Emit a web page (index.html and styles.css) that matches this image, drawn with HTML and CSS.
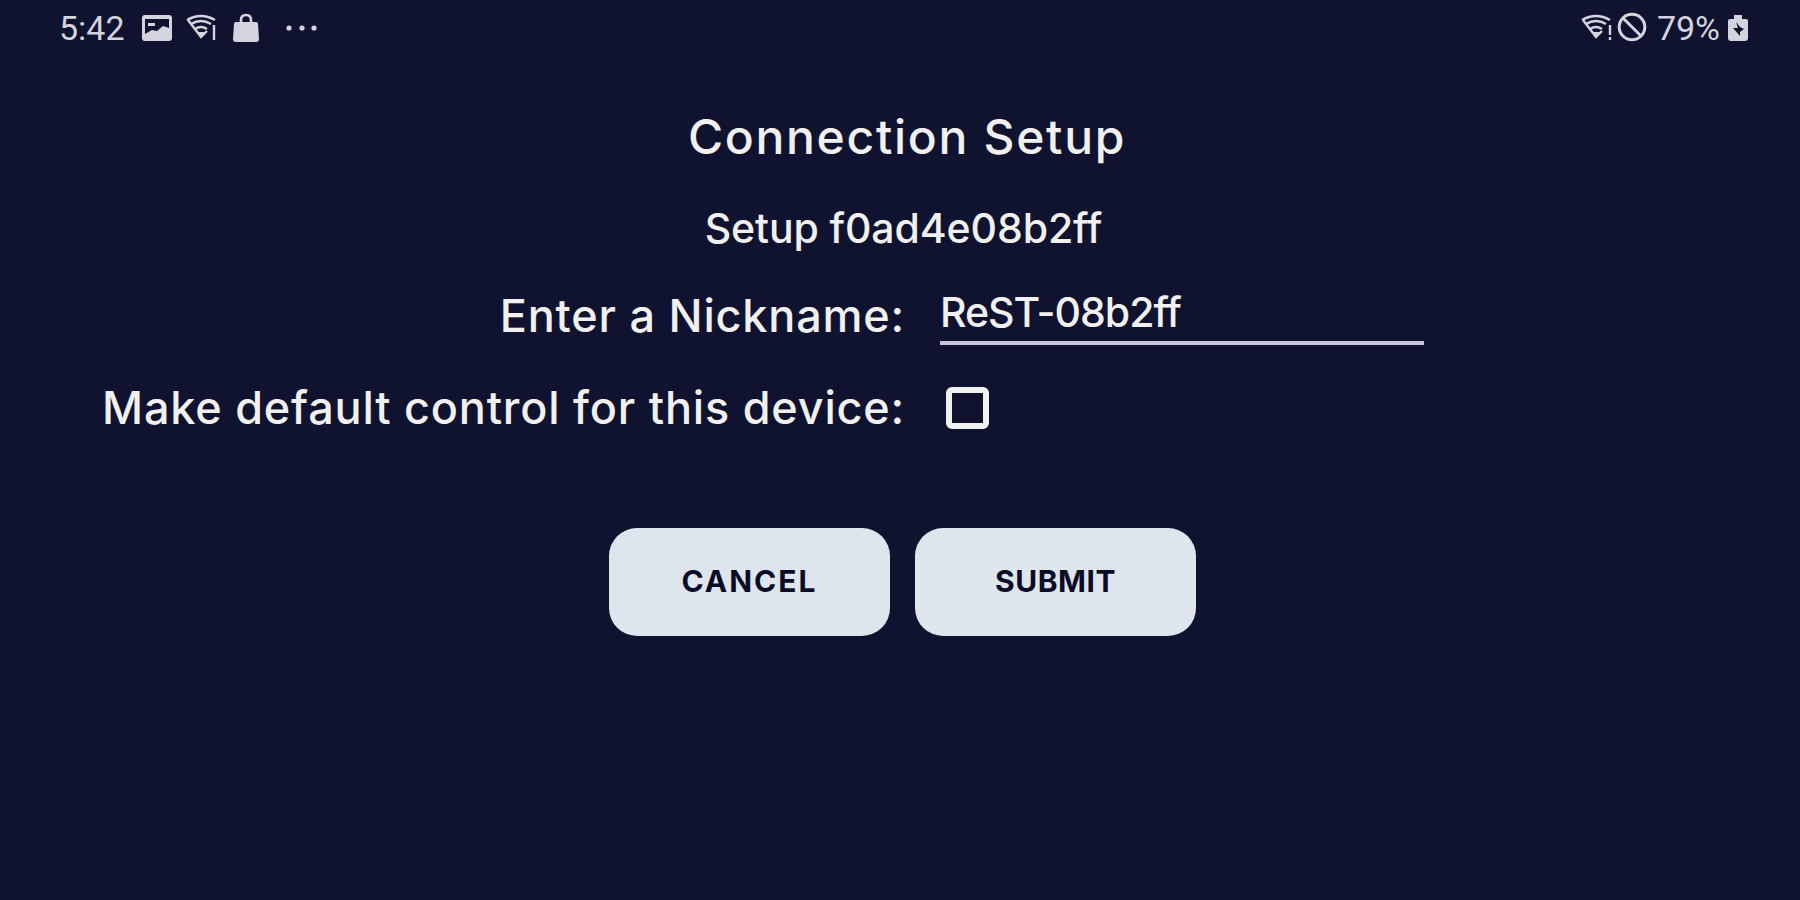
FILE: index.html
```
<!DOCTYPE html>
<html lang="en">
<head>
    <meta charset="UTF-8">
    <meta name="viewport" content="width=device-width, initial-scale=1.0">
    <title>Connection Setup</title>
    <link rel="stylesheet" href="styles.css">
</head>
<body>
    <header class="status-bar">
        <div class="status-left">
            <span class="clock">5:42</span>
            <svg class="icon-picture" width="32" height="28" viewBox="0 0 32 28">
                <path fill="currentColor" fill-rule="evenodd" d="M4 1h24q3 0 3 3v20q0 3-3 3H4q-3 0-3-3V4q0-3 3-3zM4 5v15l7-4 5 1 6-5 6 2V5zM7 9h7v3H7z"/>
            </svg>
            <svg class="icon-wifi" width="32" height="28" viewBox="0 0 32 28">
                <g fill="none" stroke="currentColor" stroke-width="2.4">
                    <path d="M1 6q14-8 28 0"/>
                    <path d="M5 10q10-6 20 0"/>
                    <path d="M9 15q6-4 12 0"/>
                    <path d="M2 6l13 17 6-6"/>
                    <path d="M28 11v15"/>
                </g>
                <path fill="currentColor" d="M11 18h8l-4 6z"/>
            </svg>
            <svg class="icon-bag" width="26" height="30" viewBox="0 0 26 30">
                <path fill="currentColor" d="M3 9h20q2 0 2 2l1 15q0 3-3 3H3q-3 0-3-3l1-15q0-2 2-2z"/>
                <path fill="none" stroke="currentColor" stroke-width="2.6" d="M8 11V7q0-5 5-5t5 5v4"/>
            </svg>
            <svg class="icon-more" width="34" height="8" viewBox="0 0 34 8">
                <g fill="currentColor"><circle cx="4" cy="4" r="2.6"/><circle cx="17" cy="4" r="2.6"/><circle cx="29" cy="4" r="2.6"/></g>
            </svg>
        </div>
        <div class="status-right">
            <svg class="icon-wifi" width="32" height="28" viewBox="0 0 32 28">
                <g fill="none" stroke="currentColor" stroke-width="2.4">
                    <path d="M1 6q14-8 28 0"/>
                    <path d="M5 10q10-6 20 0"/>
                    <path d="M9 15q6-4 12 0"/>
                    <path d="M2 6l13 17 6-6"/>
                    <path d="M29 11v10m0 2v3"/>
                </g>
                <path fill="currentColor" d="M11 18h8l-4 6z"/>
            </svg>
            <svg class="icon-blocked" width="30" height="30" viewBox="0 0 30 30">
                <g fill="none" stroke="currentColor" stroke-width="3"><circle cx="15" cy="15" r="12.8"/><path d="M6 6l18 18"/></g>
            </svg>
            <span class="battery-level">79%</span>
            <svg class="icon-battery" width="22" height="28" viewBox="0 0 22 28">
                <path fill="currentColor" fill-rule="evenodd" d="M7 1h8v4h4q2 0 2 2v17q0 3-3 3H4q-3 0-3-3V7q0-2 2-2h4zM9 8l2 6H6l7 8v-4l4-3-4-2z"/>
            </svg>
        </div>
    </header>

    <main class="setup">
        <h1 class="title">Connection Setup</h1>
        <p class="subtitle">Setup f0ad4e08b2ff</p>
        <form class="setup-form">
            <label class="field-label" for="nickname">Enter a Nickname:</label>
            <input class="nickname" type="text" id="nickname" value="ReST-08b2ff">
            <label class="field-label" for="makeDefault">Make default control for this device:</label>
            <input class="checkbox" type="checkbox" id="makeDefault">
        </form>
        <div class="actions">
            <button class="button cancel" type="button">CANCEL</button>
            <button class="button submit" type="button">SUBMIT</button>
        </div>
    </main>
</body>
</html>
```
FILE: styles.css
```
:root {
    --background-color: #10132f;
    --text-color: #f0f0ee;
    --status-color: #d3d4de;
    --button-background: #dfe5ec;
    --button-text: #0b0d28;
}
* {
    box-sizing: border-box;
}
body {
    margin: 0;
    height: 100vh;
    overflow: hidden;
    background-color: var(--background-color);
    color: var(--text-color);
    font-family: Inter, "Liberation Sans", sans-serif;
    font-weight: 500;
}
.status-bar {
    display: flex;
    justify-content: space-between;
    height: 56px;
    padding: 0 51px 0 59px;
    color: var(--status-color);
    font: 400 34px/56px Roboto, sans-serif;
}
.status-left, .status-right {
    display: flex;
    align-items: center;
}
.icon-picture {
    margin-left: 16px;
}
.status-left .icon-wifi {
    margin-left: 13px;
}
.icon-bag {
    margin-left: 15px;
}
.icon-more {
    margin-left: 26px;
}
.icon-blocked {
    margin: 0 0 3px 4px;
}
.battery-level {
    margin: 0 7px 0 10px;
}
.title {
    margin: 49px 0 0;
    padding-left: 14px;
    font-size: 48px;
    font-weight: 500;
    line-height: 64px;
    letter-spacing: 1.7px;
    text-align: center;
}
.subtitle {
    margin: 28px 0 0;
    padding-left: 7px;
    font-size: 41px;
    line-height: 62px;
    letter-spacing: -0.1px;
    text-align: center;
}
.setup-form {
    display: grid;
    grid-template-columns: 905px 484px;
    grid-template-rows: 92px 92px;
    column-gap: 35px;
    margin-top: 10px;
}
.field-label {
    font-size: 45px;
    line-height: 93px;
    letter-spacing: 0.8px;
    text-align: right;
    white-space: nowrap;
}
.nickname {
    height: 76px;
    padding: 13px 0 0;
    border: none;
    border-bottom: 4px solid #c9c4d8;
    outline: none;
    background: none;
    color: var(--text-color);
    font: 500 41px Inter, "Liberation Sans", sans-serif;
    letter-spacing: -1px;
}
.checkbox {
    appearance: none;
    width: 43px;
    height: 42px;
    margin: 26px 0 0 6px;
    border: 6px solid var(--text-color);
    border-radius: 6px;
}
.actions {
    display: flex;
    justify-content: center;
    gap: 25px;
    margin-top: 75px;
    padding-left: 5px;
}
.button {
    width: 281px;
    height: 108px;
    padding-bottom: 4px;
    border: none;
    border-radius: 28px;
    background-color: var(--button-background);
    color: var(--button-text);
    font: 700 30px Inter, "Liberation Sans", sans-serif;
}
.cancel {
    letter-spacing: 2px;
}
.submit {
    letter-spacing: 0.5px;
}
```
